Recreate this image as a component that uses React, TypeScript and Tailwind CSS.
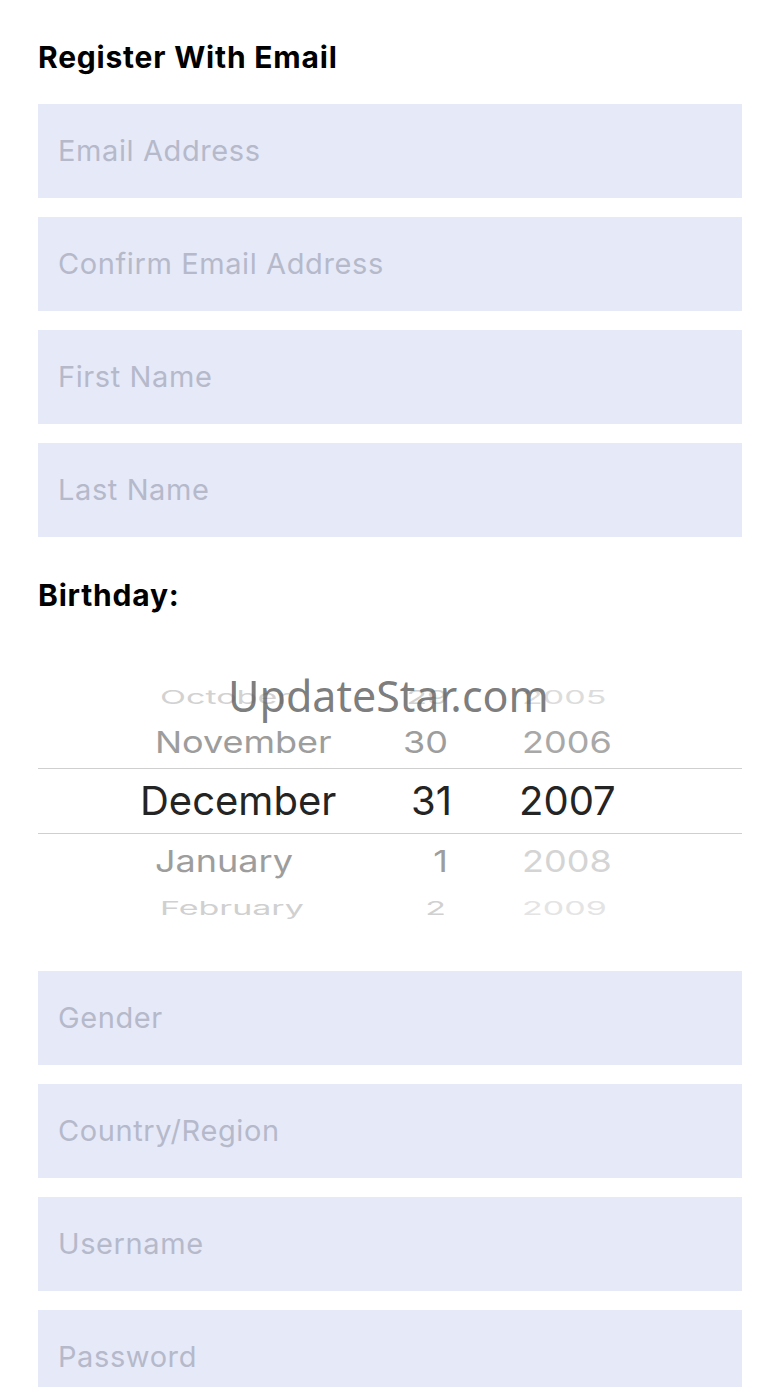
const fields1 = ['Email Address', 'Confirm Email Address', 'First Name', 'Last Name']
const fields2 = ['Gender', 'Country/Region', 'Username', 'Password']

const font = { fontFamily: 'Inter, "Noto Sans", sans-serif' }

function Field({ label }: { label: string }) {
  return (
    <div className="h-[94px] bg-[#e6e9f8] flex items-center px-5">
      <span className="text-[29px] text-[#b5b9ca] tracking-[0.6px]">{label}</span>
    </div>
  )
}

type Row = {
  month: string
  day: string
  year: string
  h: string
  size: string
  color: string
  yearColor: string
  squash: string
  monthPos: string
  yearPos: string
}

const rows: Row[] = [
  { month: 'October', day: '29', year: '2005', h: 'h-[38px]', size: 'text-[34px]', color: 'text-[#d2d2d2]', yearColor: 'text-[#dcdcdc]', squash: 'scale-y-[0.55]', monthPos: 'ml-[122px] w-[288px]', yearPos: 'ml-[74px]' },
  { month: 'November', day: '30', year: '2006', h: 'h-[52px]', size: 'text-[36px]', color: 'text-[#9d9d9d]', yearColor: 'text-[#a8a8a8]', squash: 'scale-y-[0.84]', monthPos: 'ml-[117px] w-[293px]', yearPos: 'ml-[74px]' },
  { month: 'December', day: '31', year: '2007', h: 'h-[66px]', size: 'text-[40px]', color: 'text-[#242424]', yearColor: 'text-[#242424]', squash: '', monthPos: 'ml-[102px] w-[312px]', yearPos: 'ml-[67px]' },
  { month: 'January', day: '1', year: '2008', h: 'h-[54px]', size: 'text-[36px]', color: 'text-[#9d9d9d]', yearColor: 'text-[#d4d4d4]', squash: 'scale-y-[0.84]', monthPos: 'ml-[117px] w-[293px]', yearPos: 'ml-[74px]' },
  { month: 'February', day: '2', year: '2009', h: 'h-[40px]', size: 'text-[34px]', color: 'text-[#d0d0d0]', yearColor: 'text-[#e4e4e4]', squash: 'scale-y-[0.55]', monthPos: 'ml-[122px] w-[286px]', yearPos: 'ml-[76px]' },
]

function Picker() {
  return (
    <div className="relative mt-[65px] mb-[43px]">
      {rows.map((r, i) => (
        <div
          key={i}
          className={`${r.h} flex items-center ${i === 2 ? 'border-y border-[#cfcfcf]' : ''}`}
        >
          <div className={`flex items-center w-full ${r.squash}`}>
            <span className={`${r.size} ${r.color} ${r.monthPos} leading-none`}>{r.month}</span>
            <span className={`${r.size} ${r.color} w-[0px] flex justify-end leading-none`}>
              {r.day}
            </span>
            <span className={`${r.size} ${r.yearColor} leading-none ${r.yearPos}`}>{r.year}</span>
          </div>
        </div>
      ))}
      <div
        className="absolute left-[190px] top-[-4px] text-[43px] text-[#5a5a5a]/80 leading-none pointer-events-none"
        style={{ fontFamily: '"Noto Sans", sans-serif' }}
      >
        UpdateStar.com
      </div>
    </div>
  )
}

export default function App() {
  return (
    <div className="bg-white h-[1387px] overflow-hidden px-[38px]" style={font}>
      <h1 className="pt-[38px] text-[30px] font-bold text-black leading-[38px] tracking-[0.8px]">
        Register With Email
      </h1>
      <div className="mt-[28px] flex flex-col gap-[19px]">
        {fields1.map((f) => (
          <Field key={f} label={f} />
        ))}
      </div>
      <h2 className="mt-[40px] text-[30px] font-bold text-black leading-[36px] tracking-[0.8px]">
        Birthday:
      </h2>
      <Picker />
      <div className="flex flex-col gap-[19px]">
        {fields2.map((f) => (
          <Field key={f} label={f} />
        ))}
      </div>
    </div>
  )
}
